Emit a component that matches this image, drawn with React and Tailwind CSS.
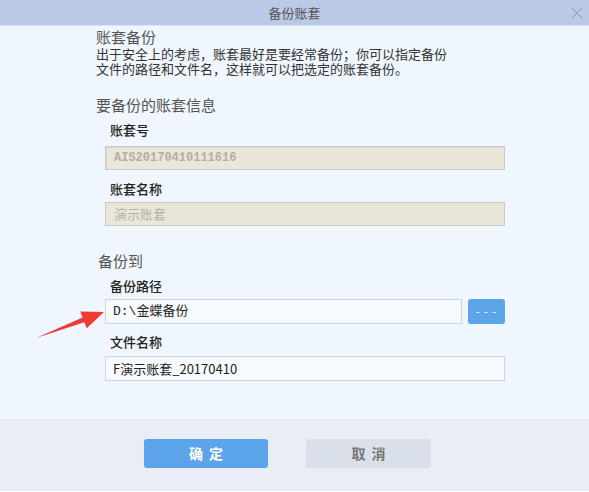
import { X } from 'lucide-react';

const cjk = "font-['Noto_Sans_CJK_SC',sans-serif]";
const mono = "font-['Liberation_Mono','Noto_Sans_CJK_SC',monospace]";

const Arrow = () => (
  <svg className="absolute left-[30px] top-[300px]" width="80" height="45" viewBox="0 0 80 45">
    <polygon points="6,38 52.6,17.6 50.3,11.5 74,12 56.7,28.3 54.4,22.2" fill="#f03a36" />
  </svg>
);

const App = () => {
  return (
    <div className={`relative w-[589px] h-[492px] bg-[#eff6fd] ${cjk} overflow-hidden`}>
      <div className="h-[26px] bg-[#b9c9e6] border-b border-[#d8e3f3] flex items-center justify-center relative">
        <span className="text-[13px] text-[#555]">备份账套</span>
        <X className="absolute right-[2px] top-[3px] w-[20px] h-[20px] text-[#8f9db5]" strokeWidth={1.25} />
      </div>

      <div className="pl-[96px] pt-[2px] h-[393px]">
        <div className="text-[15px] leading-[18px] text-[#555]">账套备份</div>
        <p className="text-[13px] leading-[15px] text-[#333]">
          出于安全上的考虑，账套最好是要经常备份；你可以指定备份<br />文件的路径和文件名，这样就可以把选定的账套备份。
        </p>

        <div className="mt-[19px] text-[15px] leading-[20px] text-[#555]">要备份的账套信息</div>
        <div className="pl-[9px] pr-[84px]">
          <div className="mt-[6px] text-[13px] leading-[18px] text-[#222] font-medium pl-[5px]">账套号</div>
          <div className={`mt-[7px] h-[24px] bg-[#ebe7d8] border border-[#c9c9c9] shadow-[inset_1px_1px_0_#d8d8d8] flex items-center pl-[8px] text-[12px] text-[#b3afa2] font-bold ${mono}`}>
            AIS20170410111616
          </div>
          <div className="mt-[10px] text-[13px] leading-[18px] text-[#222] font-medium pl-[5px]">账套名称</div>
          <div className="mt-[4px] h-[24px] bg-[#ebe7d8] border border-[#c9c9c9] flex items-center pl-[8px] text-[13px] text-[#b5b0a3]">
            演示账套
          </div>
        </div>

        <div className="mt-[25px] pl-[2px] text-[15px] leading-[20px] text-[#555]">备份到</div>
        <div className="pl-[9px] pr-[84px]">
          <div className="mt-[6px] text-[13px] leading-[18px] text-[#222] font-medium pl-[5px]">备份路径</div>
          <div className="mt-[4px] flex gap-[6px]">
            <div className={`flex-1 h-[25px] bg-[#f7fafd] border border-[#cfd3d8] flex items-center pl-[7px] text-[13px] text-[#222] ${mono}`}>
              D:\金蝶备份
            </div>
            <div className="w-[37px] h-[25px] rounded-[3px] bg-[#5ba4ea] flex items-center justify-center text-white text-[11px] tracking-[1px] leading-none">
              - - -
            </div>
          </div>
          <div className="mt-[9px] text-[13px] leading-[18px] text-[#222] font-medium pl-[5px]">文件名称</div>
          <div className="mt-[5px] h-[25px] bg-[#f7fafd] border border-[#cfd3d8] flex items-center pl-[7px] text-[13px] text-[#222]">
            F演示账套_20170410
          </div>
        </div>
      </div>

      <div className="h-[71px] bg-[#e9eef4] border-b border-[#dfe4ea] flex gap-[38px] pt-[20px] pl-[144px]">
        <button className="w-[124px] h-[29px] rounded-[3px] bg-[#5ba4ea] text-white text-[14px] font-bold tracking-[6px] pl-[6px]">确定</button>
        <button className="w-[125px] h-[29px] rounded-[3px] bg-[#d9e0e9] text-[#777] text-[14px] font-bold tracking-[6px] pl-[6px]">取消</button>
      </div>

      <Arrow />
    </div>
  );
};

export default App;
